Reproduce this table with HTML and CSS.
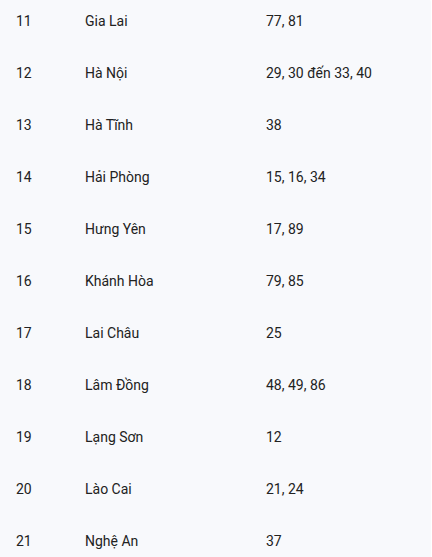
FILE: index.html
```html
<!DOCTYPE html>
<html lang="vi">
<head>
<meta charset="utf-8">
<link rel="stylesheet" href="styles.css">
</head>
<body>
<div class="table">
  <div class="row"><span>11</span><span>Gia Lai</span><span>77, 81</span></div>
  <div class="row"><span>12</span><span>Hà Nội</span><span>29, 30 đến 33, 40</span></div>
  <div class="row"><span>13</span><span>Hà Tĩnh</span><span>38</span></div>
  <div class="row"><span>14</span><span>Hải Phòng</span><span>15, 16, 34</span></div>
  <div class="row"><span>15</span><span>Hưng Yên</span><span>17, 89</span></div>
  <div class="row"><span>16</span><span>Khánh Hòa</span><span>79, 85</span></div>
  <div class="row"><span>17</span><span>Lai Châu</span><span>25</span></div>
  <div class="row"><span>18</span><span>Lâm Đồng</span><span>48, 49, 86</span></div>
  <div class="row"><span>19</span><span>Lạng Sơn</span><span>12</span></div>
  <div class="row"><span>20</span><span>Lào Cai</span><span>21, 24</span></div>
  <div class="row"><span>21</span><span>Nghệ An</span><span>37</span></div>
</div>
</body>
</html>
```
FILE: styles.css
```css
html, body {
  margin: 0;
  padding: 0;
  background: #ffffff;
}
body {
  height: 557px;
  overflow: hidden;
}
.table {
  width: 431px;
  margin-top: -5px;
  background: #f8f9fc;
  border-radius: 0 8px 8px 0;
  font-family: Roboto, "Noto Sans", sans-serif;
  font-size: 14px;
  line-height: 20px;
  color: #222222;
}
.row {
  display: grid;
  grid-template-columns: 69px 181px 1fr;
  padding: 16px 0 16px 16px;
}
```
